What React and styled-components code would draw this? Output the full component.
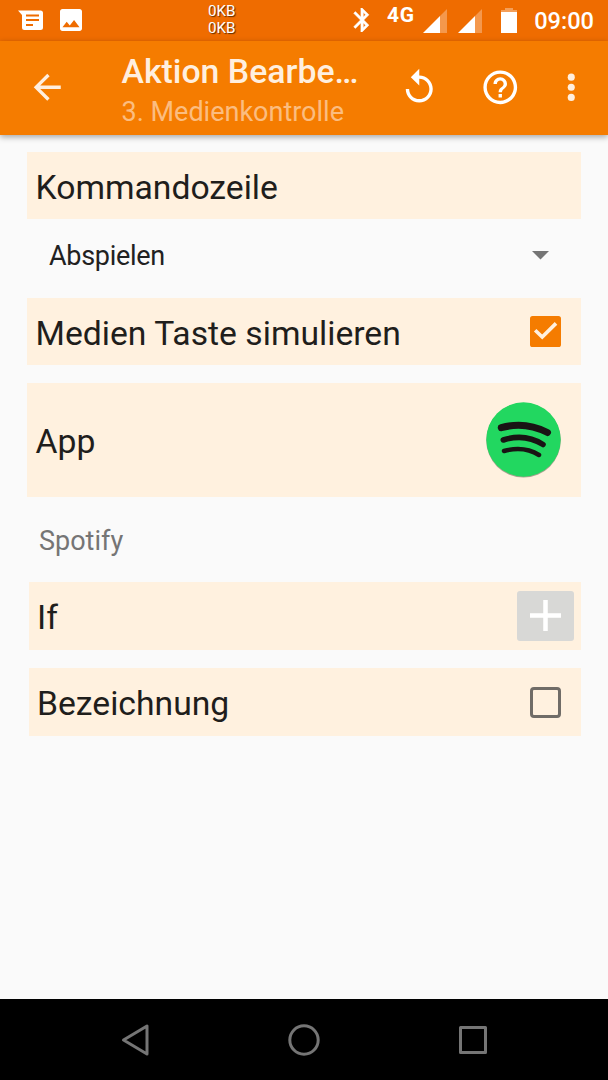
import React from "react";
import styled, { createGlobalStyle } from "styled-components";

const GlobalStyle = createGlobalStyle`
  * {
    box-sizing: border-box;
  }
  body {
    margin: 0;
    background: #fafafa;
    font-family: Roboto, "Liberation Sans", sans-serif;
  }
  svg {
    display: block;
    flex: none;
  }
`;

const Screen = styled.div`
  display: flex;
  flex-direction: column;
  width: 608px;
  height: 1080px;
  overflow: hidden;
  background: #fafafa;
`;

const StatusBar = styled.div`
  display: flex;
  align-items: flex-start;
  height: 41px;
  flex: none;
  padding: 0 14px 0 18px;
  background: #ef6c00;
  color: #fff;
`;

const StatusIcon = styled.svg`
  margin-top: ${(p) => p.$top}px;
  margin-left: ${(p) => p.$gap || 0}px;
`;

const Traffic = styled.div`
  width: 28px;
  margin: 3px 0 0 126px;
  font-size: 15.2px;
  line-height: 17px;
  text-shadow: 1px 1px 1px rgba(60, 30, 0, 0.8);
`;

const Network = styled.span`
  width: 28px;
  margin: 3px 0 0 17px;
  font-size: 21px;
  line-height: 24px;
  font-weight: 700;
  letter-spacing: 0.6px;
`;

const Clock = styled.span`
  margin-left: auto;
  font-size: 23.6px;
  line-height: 28px;
  margin-top: 7px;
  font-weight: 500;
`;

const AppBar = styled.header`
  display: flex;
  align-items: center;
  height: 94px;
  flex: none;
  padding: 0 17px 0 27px;
  background: #f57c00;
  box-shadow: 0 2px 6px rgba(0, 0, 0, 0.35);
`;

const BarIcon = styled.svg`
  width: 40.5px;
  height: 40.5px;
  margin-left: ${(p) => p.$gap || 0}px;
  margin-bottom: 1px;
  fill: ${(p) => (p.$soft ? "#ffefdf" : "#fff")};
`;

const Titles = styled.div`
  width: 240px;
  margin-left: 54px;
  padding-top: 4px;
`;

const Title = styled.h1`
  margin: 0;
  white-space: nowrap;
  font-size: 33.8px;
  line-height: 40px;
  font-weight: 500;
  color: #ffefdf;
`;

const Subtitle = styled.div`
  font-size: 27px;
  line-height: 32px;
  margin-top: 4px;
  color: #fbbd80;
`;

const Form = styled.main`
  flex: 1;
  padding: 17px 27px 0;
`;

const Row = styled.div`
  display: flex;
  align-items: center;
  justify-content: space-between;
  height: ${(p) => p.$height || 67}px;
  margin-left: ${(p) => p.$inset || 0}px;
  margin-top: ${(p) => p.$gap || 0}px;
  padding: 0 ${(p) => p.$right || 20}px 0 8.5px;
  background: #fff1df;
`;

const Label = styled.span`
  font-size: 33.7px;
  line-height: 40px;
  padding-top: 5px;
  color: #1f1e1c;
`;

const Select = styled.div`
  display: flex;
  align-items: center;
  justify-content: space-between;
  height: 79px;
  padding: 0 32px 6px 22px;
  font-size: 27px;
  letter-spacing: -0.3px;
  color: #212121;
`;

const Value = styled.div`
  height: 85px;
  padding: 28px 0 0 12px;
  font-size: 27px;
  line-height: 32px;
  color: #757575;
`;

const AddButton = styled.button`
  display: flex;
  align-items: center;
  justify-content: center;
  width: 57px;
  height: 50px;
  padding: 0;
  border: 0;
  border-radius: 3px;
  background: #d8d8d6;
`;

const Box = styled.span`
  width: 31px;
  height: 31px;
  margin-top: 1px;
  border: 3px solid #706c67;
  border-radius: 4px;
`;

const NavBar = styled.nav`
  display: flex;
  align-items: center;
  justify-content: space-between;
  height: 81px;
  flex: none;
  padding: 0 119px;
  background: #000;
`;

const Signal = ({ gap }) => (
  <StatusIcon $top={9} $gap={gap} width="24" height="24" viewBox="0 0 24 24">
    <path d="M24 0V24H17V7Z" fill="#fff" fillOpacity=".3" />
    <path d="M17 7V24H0Z" fill="#fff" />
  </StatusIcon>
);

const App = () => {
  return (
    <>
      <GlobalStyle />
      <Screen>
        <StatusBar>
          <StatusIcon $top={10} width="25" height="20" viewBox="0 0 25 20">
            <path
              d="M0 .5H22.500Q25 .5 25 3V17.500Q25 20 22.500 20H6.500Q4 20 4 17.500V5Z"
              fill="#fff"
            />
            <path
              d="M8 5.500H21M8 10H21M8 15H15"
              stroke="#ef6c00"
              strokeWidth="2"
            />
          </StatusIcon>
          <StatusIcon $top={9} $gap={17} width="22" height="22" viewBox="3 3 18 18">
            <path
              d="M21 19V5c0-1.100-.9-2-2-2H5c-1.100 0-2 .9-2 2v14c0 1.100.9 2 2 2h14c1.100 0 2-.9 2-2zM8.500 13.500l2.500 3.010L14.500 12l4.500 6H5l3.500-4.500z"
              fill="#fff"
            />
          </StatusIcon>
          <Traffic>
            0KB
            <br />
            0KB
          </Traffic>
          <StatusIcon $top={8} $gap={117} width="17" height="24" viewBox="4.500 2 14 20">
            <path
              d="M17.710 7.710L12 2h-1v7.590L6.410 5 5 6.410 10.590 12 5 17.590 6.410 19 11 14.410V22h1l5.710-5.710-4.300-4.290 4.300-4.290zM13 5.830l1.880 1.880L13 9.590V5.830zm1.880 10.460L13 18.170v-3.760l1.880 1.880z"
              fill="#fff"
              stroke="#fff"
              strokeWidth=".4"
            />
          </StatusIcon>
          <Network>4G</Network>
          <Signal gap={8} />
          <Signal gap={11} />
          <StatusIcon $top={8} $gap={19} width="16" height="25" viewBox="0 0 16 25">
            <path d="M4 0H12V2H16V4H0V2H4Z" fill="#fff" fillOpacity=".35" />
            <path d="M0 4H16V25H0Z" fill="#fff" />
          </StatusIcon>
          <Clock>09:00</Clock>
        </StatusBar>

        <AppBar>
          <BarIcon $soft viewBox="0 0 24 24">
            <path d="M20 11H7.830l5.590-5.590L12 4l-8 8 8 8 1.410-1.410L7.830 13H20v-2z" />
          </BarIcon>
          <Titles>
            <Title>Aktion Bearbe…</Title>
            <Subtitle>3. Medienkontrolle</Subtitle>
          </Titles>
          <BarIcon $gap={37} viewBox="0 0 24 24">
            <path d="M12 5V1L7 6l5 5V7c3.310 0 6 2.690 6 6s-2.690 6-6 6-6-2.690-6-6H4c0 4.420 3.580 8 8 8s8-3.580 8-8-3.580-8-8-8z" />
          </BarIcon>
          <BarIcon $gap={40.5} viewBox="0 0 24 24">
            <path d="M11 18h2v-2h-2v2zm1-16C6.480 2 2 6.480 2 12s4.480 10 10 10 10-4.480 10-10S17.520 2 12 2zm0 18c-4.410 0-8-3.590-8-8s3.590-8 8-8 8 3.590 8 8-3.590 8-8 8zm0-14c-2.210 0-4 1.790-4 4h2c0-1.100.9-2 2-2s2 .9 2 2c0 2-3 1.750-3 5h2c0-2.250 3-2.500 3-5 0-2.210-1.790-4-4-4z" />
          </BarIcon>
          <BarIcon $soft $gap={30.5} viewBox="0 0 24 24">
            <circle cx="12" cy="6" r="2.100" />
            <circle cx="12" cy="12" r="2.100" />
            <circle cx="12" cy="18" r="2.100" />
          </BarIcon>
        </AppBar>

        <Form>
          <Row>
            <Label>Kommandozeile</Label>
          </Row>
          <Select>
            Abspielen
            <svg width="17" height="9" viewBox="0 0 17 9">
              <path d="M0 0H17L8.500 8.500Z" fill="#757575" />
            </svg>
          </Select>
          <Row>
            <Label>Medien Taste simulieren</Label>
            <svg width="31" height="31" viewBox="3 3 18 18">
              <rect x="3" y="3" width="18" height="18" rx="1.500" fill="#f57c00" />
              <path
                d="M6 11.300L10.100 15.200L18.100 7.300"
                fill="none"
                stroke="#fff0de"
                strokeWidth="2.100"
              />
            </svg>
          </Row>
          <Row $height={114.5} $gap={17.5}>
            <Label>App</Label>
            <svg width="75" height="76" viewBox="0 0 75 76">
              <circle cx="37.500" cy="38.300" r="37.300" fill="#a9a08f" />
              <circle cx="37.500" cy="37.500" r="37.200" fill="#22d760" />
              <g fill="none" stroke="#191414" strokeLinecap="round">
                <path d="M15.300 25.700Q39 19 61.500 30.500" strokeWidth="7" />
                <path d="M17.300 38Q39 31 57 42.500" strokeWidth="5.600" />
                <path d="M18 49Q38 43.500 53 53" strokeWidth="4.500" />
              </g>
            </svg>
          </Row>
          <Value>Spotify</Value>
          <Row $inset={1.5} $right={7} $height={67.5}>
            <Label>If</Label>
            <AddButton>
              <svg width="31" height="31" viewBox="0 0 31 31">
                <path d="M0 15.500H31M15.500 0V31" stroke="#fff" strokeWidth="4.500" />
              </svg>
            </AddButton>
          </Row>
          <Row $inset={1.5} $gap={18.5} $height={67.5}>
            <Label>Bezeichnung</Label>
            <Box />
          </Row>
        </Form>

        <NavBar>
          <svg width="32" height="34" viewBox="0 0 32 34">
            <path
              d="M4.500 17L28 3V31Z"
              fill="none"
              stroke="#757575"
              strokeWidth="3"
              strokeLinejoin="round"
            />
          </svg>
          <svg width="32" height="32" viewBox="0 0 32 32">
            <circle cx="16" cy="16" r="14.200" fill="none" stroke="#757575" strokeWidth="3" />
          </svg>
          <svg width="32" height="32" viewBox="0 0 32 32">
            <rect
              x="3.500"
              y="3.500"
              width="25"
              height="25"
              fill="none"
              stroke="#757575"
              strokeWidth="3"
              strokeLinejoin="round"
            />
          </svg>
        </NavBar>
      </Screen>
    </>
  );
};

export default App;
